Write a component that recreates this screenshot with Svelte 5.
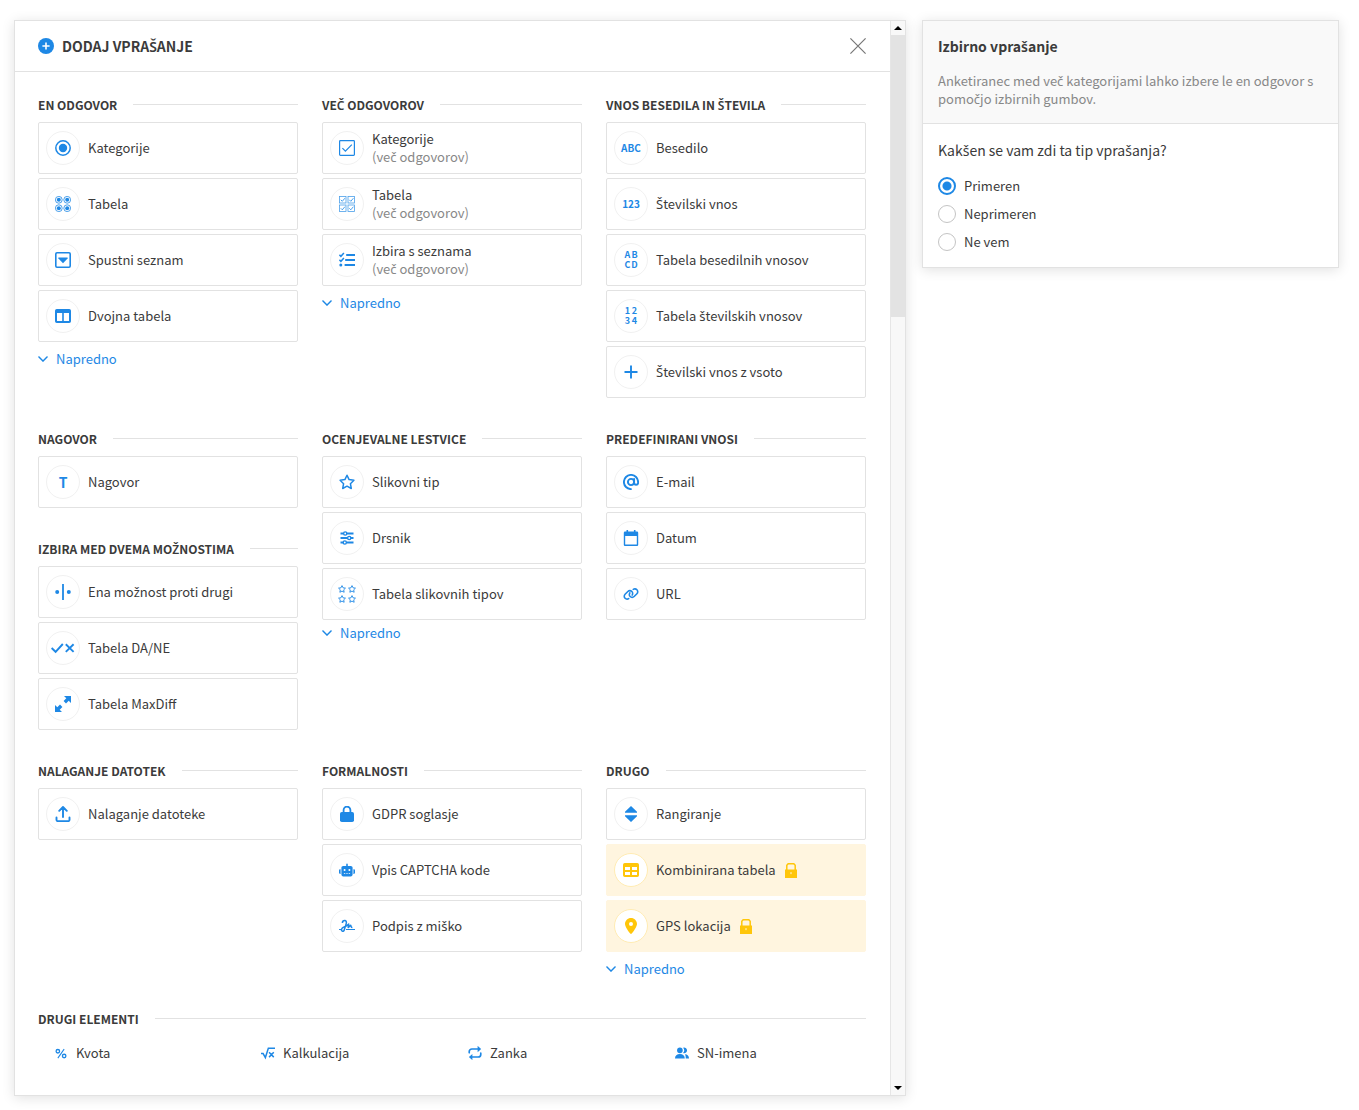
<script>
  const star = 'M8 1.2l2.1 4.4 4.8.7-3.5 3.4.9 4.8L8 12.2l-4.3 2.3.9-4.8L1.1 6.3l4.8-.7z';

  const icons = {
    add: { box: '0 0 16 16', body: '<circle cx="8" cy="8" r="8"/><path d="M8 4.4v7.2M4.4 8h7.2" stroke="#fff" stroke-width="1.6"/>' },
    close: { box: '0 0 16 16', body: '<path d="M.4.4l15.2 15.2M15.6.4L.4 15.6" fill="none" stroke="currentColor" stroke-width="1.2"/>' },
    chevron: { box: '0 0 10 6', body: '<path d="M.5.6L5 5.1 9.5.6" fill="none" stroke="currentColor" stroke-width="1.4"/>' },
    radio: { box: '0 0 16 16', body: '<circle cx="8" cy="8" r="7.2" fill="none" stroke="currentColor" stroke-width="1.5"/><circle cx="8" cy="8" r="4.2"/>' },
    radios: {
      box: '0 0 16 16',
      body: [[3.8, 3.8], [12.2, 3.8], [3.8, 12.2], [12.2, 12.2]]
        .map(([x, y]) => `<circle cx="${x}" cy="${y}" r="3.4" fill="none" stroke="currentColor" stroke-width=".8"/><circle cx="${x}" cy="${y}" r="2"/>`)
        .join('')
    },
    dropdown: { box: '0 0 16 16', body: '<rect x=".8" y=".8" width="14.4" height="14.4" rx="1.2" fill="none" stroke="currentColor" stroke-width="1.6"/><path d="M3.4 5.6h9.2v.8L8 11.2 3.4 6.4z"/>' },
    columns: { box: '0 0 16 16', body: '<path fill-rule="evenodd" d="M1.8 1h12.4A1.8 1.8 0 0 1 16 2.800v10.400a1.800 1.800 0 0 1-1.800 1.800H1.800A1.800 1.800 0 0 1 0 13.200V2.800A1.800 1.800 0 0 1 1.800 1zM2 5v8h5.200V5zM8.800 5v8H14V5z"/>' },
    check: { box: '0 0 16 16', body: '<rect x=".6" y=".6" width="14.800" height="14.800" rx=".8" fill="none" stroke="currentColor" stroke-width="1.200"/><path d="M3.400 8.200l3 3 6.400-6.600" fill="none" stroke="currentColor" stroke-width="1.200"/>' },
    checks: {
      box: '0 0 16 16',
      body: [[0, 0], [8.5, 0], [0, 8.5], [8.5, 8.5]]
        .map(([x, y]) => `<g transform="translate(${x} ${y})" fill="none" stroke="currentColor"><rect x=".5" y=".5" width="6.500" height="6.500" stroke-width=".8" opacity=".8"/><path d="M1.800 3.800l1.500 1.500 2.600-3.100" stroke-width=".8"/></g>`)
        .join('')
    },
    list: { box: '0 0 16 16', body: '<path d="M7.200 3h8.800M6.200 8H16M5.600 13H16" stroke="currentColor" stroke-width="1.900"/><path d="M.4 2.800l1.500 1.500L4.900 1M.4 7.800l1.500 1.500L4.900 6" fill="none" stroke="currentColor" stroke-width="1.500"/><circle cx="1.800" cy="13" r="1.500"/>' },
    plus: { box: '0 0 16 16', body: '<path d="M8 1.500v13M1.500 8h13" stroke="currentColor" stroke-width="1.900"/>' },
    star: { box: '0 0 16 16', body: `<path d="${star}" fill="none" stroke="currentColor" stroke-width="1.500" stroke-linejoin="round"/>` },
    stars: {
      box: '0 0 18 18',
      body: [[0, 0], [10, 0], [0, 10], [10, 10]]
        .map(([x, y]) => `<path transform="translate(${x} ${y}) scale(.5)" d="${star}" fill="none" stroke="currentColor" stroke-width="1.800"/>`)
        .join('')
    },
    sliders: { box: '0 0 16 16', body: '<path d="M1.500 3.500h3M8 3.500h6.500M1.500 8h7M12 8h2.500M1.500 12.500h2.500M7.500 12.500h7" stroke="currentColor" stroke-width="1.900"/><g fill="none" stroke="currentColor" stroke-width="1.400"><circle cx="6.200" cy="3.500" r="1.600"/><circle cx="10.200" cy="8" r="1.600"/><circle cx="5.800" cy="12.500" r="1.600"/></g>' },
    at: { box: '0 0 16 16', body: '<g fill="none" stroke="currentColor" stroke-width="1.900" stroke-linecap="round"><circle cx="8" cy="8" r="3.100"/><path d="M11.100 5v3.700a2 2 0 0 0 4 0V8A7.100 7.100 0 1 0 8 15.100"/></g>' },
    calendar: { box: '0 0 16 16', body: '<path fill-rule="evenodd" d="M3.500 0h1.600v1.500h5.800V0h1.600v1.500H14a1.200 1.200 0 0 1 1.200 1.200v12A1.200 1.200 0 0 1 14 16H2a1.200 1.200 0 0 1-1.200-1.300v-12A1.200 1.200 0 0 1 2 1.500h1.500zM2.200 6v8.600h11.600V6z"/>' },
    link: { box: '0 0 640 512', body: '<path d="M579.8 267.7c56.5-56.5 56.5-148 0-204.5c-50-50-128.8-56.5-186.3-15.4l-1.6 1.1c-14.4 10.3-17.7 30.3-7.4 44.6s30.3 17.7 44.6 7.4l1.6-1.1c32.1-22.9 76-19.3 103.8 8.6c31.5 31.5 31.5 82.5 0 114L422.3 334.8c-31.5 31.5-82.5 31.5-114 0c-27.9-27.9-31.5-71.8-8.6-103.8l1.1-1.6c10.3-14.4 6.9-34.4-7.4-44.6s-34.4-6.9-44.6 7.4l-1.1 1.6C206.5 251.2 213 330 263 380c56.5 56.5 148 56.5 204.5 0L579.8 267.7zM60.2 244.3c-56.5 56.5-56.5 148 0 204.5c50 50 128.8 56.5 186.3 15.4l1.6-1.1c14.4-10.3 17.7-30.3 7.4-44.6s-30.3-17.7-44.6-7.4l-1.6 1.1c-32.1 22.9-76 19.3-103.8-8.6C74 372 74 321 105.5 289.5L217.7 177.2c31.5-31.5 82.5-31.5 114 0c27.9 27.9 31.5 71.8 8.6 103.9l-1.1 1.6c-10.3 14.4-6.9 34.4 7.4 44.6s34.4 6.9 44.6-7.4l1.1-1.6C433.5 260.8 427 182 377 132c-56.5-56.5-148-56.5-204.5 0L60.2 244.3z"/>' },
    versus: { box: '0 0 16 16', body: '<path d="M7.100 0h1.800v16H7.100z"/><circle cx="2.200" cy="8" r="2"/><circle cx="13.800" cy="8" r="2"/>' },
    yesno: { box: '0 0 24 16', body: '<path d="M.6 8l4 3.800L11.800 4M14.800 4.300l7.800 7.600M22.600 4.300l-7.800 7.600" fill="none" stroke="currentColor" stroke-width="1.900"/>' },
    expand: { box: '0 0 16 16', body: '<path d="M9 0h7v7l-2.300-2.300L11 7.400 8.600 5l2.700-2.700zM7 16H0V9l2.300 2.300L5 8.600 7.400 11l-2.700 2.700z"/>' },
    upload: { box: '0 0 16 16', body: '<g fill="none" stroke="currentColor" stroke-width="1.900" stroke-linecap="round" stroke-linejoin="round"><path d="M8 11V1M4.200 4.800L8 1l3.800 3.800"/><path d="M1.500 11.500V14a1.200 1.200 0 0 0 1.200 1.100h10.600a1.200 1.200 0 0 0 1.200-1.100v-2.500"/></g>' },
    lock: { box: '0 0 16 16', body: '<rect x="1" y="6" width="14" height="10" rx="1.800"/><path d="M4.600 7V4a3.400 3.400 0 0 1 6.800 0v3" fill="none" stroke="currentColor" stroke-width="1.800"/>' },
    robot: { box: '0 -64 640 640', body: '<path d="M320 0c17.7 0 32 14.3 32 32V96H472c39.8 0 72 32.2 72 72V440c0 39.8-32.2 72-72 72H168c-39.8 0-72-32.2-72-72V168c0-39.8 32.2-72 72-72H288V32c0-17.7 14.3-32 32-32zM208 384c-8.8 0-16 7.2-16 16s7.2 16 16 16h32c8.8 0 16-7.2 16-16s-7.2-16-16-16H208zm96 0c-8.8 0-16 7.2-16 16s7.2 16 16 16h32c8.8 0 16-7.2 16-16s-7.2-16-16-16H304zm96 0c-8.8 0-16 7.2-16 16s7.2 16 16 16h32c8.8 0 16-7.2 16-16s-7.2-16-16-16H400zM264 256a40 40 0 1 0 -80 0 40 40 0 1 0 80 0zm152 40a40 40 0 1 0 0-80 40 40 0 1 0 0 80zM48 224H64V416H48c-26.5 0-48-21.5-48-48V272c0-26.5 21.5-48 48-48zm544 0c26.5 0 48 21.5 48 48v96c0 26.5-21.5 48-48 48H576V224h16z"/>' },
    sign: { box: '0 0 16 16', body: '<g fill="none" stroke="currentColor" stroke-width="1.500" stroke-linejoin="round"><path d="M3.400 5c0-1.700 1-2.400 2.300-2.400 1.600 0 2 1.300 1.500 3L5.400 11.500c-.4 1.500-1.200 2-2.200 1.600-1.500-.7-.6-3 1.300-3.800L7.600 7.900l2.100-1.900-.5 3.600 2.400-2.400c.6 1.100.4 2.400 1.800 2.400"/><path d="M0 11.500h2.500M7 11.500h9" stroke-width="1.200"/></g>' },
    rank: { box: '0 0 16 16', body: '<path d="M8 0l6 5.700v1H2v-1zM8 16l6-5.700v-1H2v1z"/>' },
    table: { box: '0 0 16 16', body: '<path fill-rule="evenodd" d="M1.800 1h12.400A1.800 1.800 0 0 1 16 2.800v10.400a1.800 1.800 0 0 1-1.800 1.800H1.800A1.800 1.800 0 0 1 0 13.200V2.800A1.800 1.800 0 0 1 1.800 1zM2 5v3h5V5zM9 5v3h5V5zM2 10v3h5v-3zM9 10v3h5v-3z"/>' },
    pin: { box: '0 0 384 512', body: '<path d="M215.7 499.2C267 435 384 279.4 384 192C384 86 298 0 192 0S0 86 0 192c0 87.4 117 243 168.3 307.200c12.3 15.3 35.1 15.3 47.4 0zM192 128a64 64 0 1 1 0 128 64 64 0 1 1 0-128z"/>' },
    padlock: { box: '0 0 14 15', body: '<path d="M2.800 7V2.200L4.200.7h5.600l1.400 1.500V7" fill="none" stroke="currentColor" stroke-width="1.500"/><path fill-rule="evenodd" d="M1 6.500h12V15H1zM6 9.500l1 2 1-2z"/>' },
    percent: { box: '0 0 16 16', body: '<g fill="none" stroke="currentColor" stroke-width="1.500"><circle cx="4.400" cy="6" r="2"/><circle cx="11.600" cy="11.400" r="2"/><path d="M11.600 3.600L4.400 13.800" stroke-width="1.200"/></g>' },
    root: { box: '0 0 16 16', body: '<path d="M0 8.600h2.400l2.600 4.600L8.400 2.600H16M9.200 7.200l5.400 5.500M14.600 7.200l-5.400 5.500" fill="none" stroke="currentColor" stroke-width="1.700"/>' },
    repeat: { box: '0 0 16 16', body: '<path d="M1.400 7.800V6.400a3 3 0 0 1 3-3H12M14.600 8.200v1.400a3 3 0 0 1-3 3H4" fill="none" stroke="currentColor" stroke-width="1.900" stroke-linecap="round"/><path d="M11-.2l4 3.600L11 7zM5 9l-4 3.600 4 3.600z"/>' },
    users: { box: '0 0 16 16', body: '<circle cx="5.600" cy="5" r="3.200"/><path d="M0 14.400c0-3.400 2.200-5.200 5.600-5.200s5.600 1.800 5.600 5.200zM9.200 7.900a3.200 3.200 0 1 0 0-5.800 4.200 4.200 0 0 1 0 5.800zM12.300 14.400H16c0-3.300-1.700-5-4.700-5.100.8 1 1 2.900 1 5.100z"/>' }
  };

  const many = '(več odgovorov)';

  const rows = [
    [
      [{ title: 'EN ODGOVOR', more: true, items: [
        { icon: 'radio', label: 'Kategorije' },
        { icon: 'radios', label: 'Tabela' },
        { icon: 'dropdown', label: 'Spustni seznam' },
        { icon: 'columns', label: 'Dvojna tabela' }
      ] }],
      [{ title: 'VEČ ODGOVOROV', more: true, items: [
        { icon: 'check', label: 'Kategorije', note: many },
        { icon: 'checks', label: 'Tabela', note: many },
        { icon: 'list', label: 'Izbira s seznama', note: many }
      ] }],
      [{ title: 'VNOS BESEDILA IN ŠTEVILA', items: [
        { text: ['ABC'], label: 'Besedilo' },
        { text: ['123'], label: 'Številski vnos' },
        { text: ['A', 'B', 'C', 'D'], label: 'Tabela besedilnih vnosov' },
        { text: ['1', '2', '3', '4'], label: 'Tabela številskih vnosov' },
        { icon: 'plus', label: 'Številski vnos z vsoto' }
      ] }]
    ],
    [
      [
        { title: 'NAGOVOR', items: [{ text: ['T'], big: true, label: 'Nagovor' }] },
        { title: 'IZBIRA MED DVEMA MOŽNOSTIMA', items: [
          { icon: 'versus', label: 'Ena možnost proti drugi' },
          { icon: 'yesno', wide: true, label: 'Tabela DA/NE' },
          { icon: 'expand', label: 'Tabela MaxDiff' }
        ] }
      ],
      [{ title: 'OCENJEVALNE LESTVICE', more: true, tight: true, items: [
        { icon: 'star', label: 'Slikovni tip' },
        { icon: 'sliders', label: 'Drsnik' },
        { icon: 'stars', wide: true, label: 'Tabela slikovnih tipov' }
      ] }],
      [{ title: 'PREDEFINIRANI VNOSI', items: [
        { icon: 'at', label: 'E-mail' },
        { icon: 'calendar', label: 'Datum' },
        { icon: 'link', label: 'URL' }
      ] }]
    ],
    [
      [{ title: 'NALAGANJE DATOTEK', items: [{ icon: 'upload', label: 'Nalaganje datoteke' }] }],
      [{ title: 'FORMALNOSTI', items: [
        { icon: 'lock', label: 'GDPR soglasje' },
        { icon: 'robot', label: 'Vpis CAPTCHA kode' },
        { icon: 'sign', label: 'Podpis z miško' }
      ] }],
      [{ title: 'DRUGO', more: true, items: [
        { icon: 'rank', label: 'Rangiranje' },
        { icon: 'table', label: 'Kombinirana tabela', locked: true },
        { icon: 'pin', label: 'GPS lokacija', locked: true }
      ] }]
    ]
  ];

  const extras = [
    { icon: 'percent', label: 'Kvota' },
    { icon: 'root', label: 'Kalkulacija' },
    { icon: 'repeat', label: 'Zanka' },
    { icon: 'users', label: 'SN-imena' }
  ];

  const answers = ['Primeren', 'Neprimeren', 'Ne vem'];
  let answer = $state('Primeren');
</script>

{#snippet icon(name, cls = '')}
  <svg class="icon {cls}" viewBox={icons[name].box} fill="currentColor" aria-hidden="true">{@html icons[name].body}</svg>
{/snippet}

<!-- The main typeface has no letters with a caron, so those come from the second one. -->
{#snippet words(text)}<span>{#each text.split(/([čšžČŠŽ])/) as part, i}{#if i % 2}<span class="caron">{part}</span>{:else}{part}{/if}{/each}</span>{/snippet}

<div class="page">
  <main class="panel picker">
    <div class="content">
      <header>
        {@render icon('add')}
        <h1>{@render words('DODAJ VPRAŠANJE')}</h1>
        <button class="close" aria-label="Zapri">{@render icon('close')}</button>
      </header>

      <div class="body">
        {#each rows as columns}
          <div class="row">
            {#each columns as sections}
              <div class="column">
                {#each sections as section}
                  <section>
                    <h2>{@render words(section.title)}</h2>
                    <div class="cards">
                      {#each section.items as item}
                        <button class="card" class:locked={item.locked}>
                          <span class="badge">
                            {#if item.icon}
                              {@render icon(item.icon, item.wide ? 'wide' : '')}
                            {:else}
                              <span class="letters" class:quad={item.text.length === 4} class:big={item.big}>
                                {#each item.text as part}<span>{part}</span>{/each}
                              </span>
                            {/if}
                          </span>
                          <span class="label">
                            {@render words(item.label)}
                            {#if item.note}<span class="note">{@render words(item.note)}</span>{/if}
                          </span>
                          {#if item.locked}{@render icon('padlock', 'padlock')}{/if}
                        </button>
                      {/each}
                    </div>
                    {#if section.more}
                      <button class="more" class:tight={section.tight}>{@render icon('chevron', 'chevron')}Napredno</button>
                    {/if}
                  </section>
                {/each}
              </div>
            {/each}
          </div>
        {/each}

        <section>
          <h2>DRUGI ELEMENTI</h2>
          <div class="extras">
            {#each extras as extra}
              <button class="extra">{@render icon(extra.icon, 'small')}{extra.label}</button>
            {/each}
          </div>
        </section>
      </div>
    </div>

    <div class="scrollbar" aria-hidden="true">
      <span class="arrow up"></span>
      <span class="track"><span class="thumb"></span></span>
      <span class="arrow down"></span>
    </div>
  </main>

  <aside class="panel info">
    <div class="intro">
      <h3>{@render words('Izbirno vprašanje')}</h3>
      <p>{@render words('Anketiranec med več kategorijami lahko izbere le en odgovor s pomočjo izbirnih gumbov.')}</p>
    </div>
    <fieldset>
      <legend>{@render words('Kakšen se vam zdi ta tip vprašanja?')}</legend>
      {#each answers as option}
        <label><input type="radio" name="answer" value={option} bind:group={answer} />{option}</label>
      {/each}
    </fieldset>
  </aside>
</div>

<style>
  :global(body) {
    margin: 0;
    background: #fff;
  }
  .page {
    box-sizing: border-box;
    min-height: 100vh;
    padding: 20px 20px 14px 14px;
    display: grid;
    grid-template-columns: minmax(0, 892fr) minmax(0, 417fr);
    gap: 16px;
    font: 13px/18px 'Noto Sans CJK JP', 'Noto Sans', sans-serif;
    color: #3b3b3b;
  }
  .caron {
    font-family: 'Noto Sans', 'Open Sans', sans-serif;
    line-height: 1;
  }
  button {
    margin: 0;
    padding: 0;
    border: 0;
    background: none;
    font: inherit;
    color: inherit;
    text-align: left;
    cursor: pointer;
  }
  h1, h2, h3, p {
    margin: 0;
  }
  h1, h3, legend {
    font-size: 14px;
    line-height: 20px;
  }
  h1, h2, h3 {
    font-weight: 600;
  }
  .panel {
    border: 1px solid #e2e2e2;
    background: #fff;
    box-shadow: 0 2px 12px rgba(0, 0, 0, 0.12);
  }
  .picker {
    display: flex;
  }
  .content {
    flex: 1;
    min-width: 0;
  }
  .icon {
    width: 16px;
    height: 16px;
    flex: none;
    display: block;
    color: #1e88e5;
  }
  .icon.wide {
    width: 24px;
    height: 18px;
  }
  .icon.small {
    width: 14px;
    height: 14px;
  }
  .icon.chevron {
    width: 10px;
    height: 6px;
  }
  header {
    height: 50px;
    padding: 0 24px 0 23px;
    display: flex;
    align-items: center;
    gap: 8px;
    border-bottom: 1px solid #e2e2e2;
  }
  .close {
    margin-left: auto;
  }
  .close .icon {
    color: #777;
  }
  .body {
    padding: 24px 24px 32px 23px;
    display: grid;
    gap: 32px;
  }
  .row {
    display: grid;
    grid-template-columns: repeat(3, minmax(0, 1fr));
    gap: 24px;
    align-items: start;
  }
  .column {
    display: grid;
    gap: 32px;
  }
  h2 {
    margin-bottom: 8px;
    display: flex;
    align-items: center;
    gap: 16px;
    font-size: 12px;
    line-height: 18px;
    white-space: nowrap;
  }
  h2::after {
    content: '';
    flex: 1;
    height: 1px;
    margin-bottom: 1px;
    background: #e2e2e2;
  }
  .cards {
    display: grid;
    gap: 4px;
  }
  .card {
    box-sizing: border-box;
    min-height: 52px;
    padding: 0 7px;
    display: flex;
    align-items: center;
    gap: 8px;
    border: 1px solid #e2e2e2;
    border-radius: 2px;
  }
  .badge {
    box-sizing: border-box;
    width: 34px;
    height: 34px;
    flex: none;
    display: flex;
    align-items: center;
    justify-content: center;
    border: 1px solid #f1f1f1;
    border-radius: 50%;
    background: #fff;
  }
  .letters {
    font-size: 10px;
    line-height: 10px;
    font-weight: 700;
    color: #1e88e5;
  }
  .letters.quad {
    display: grid;
    grid-template-columns: 7px 7px;
    font-size: 9px;
    text-align: center;
  }
  .letters.big {
    font-size: 14px;
  }
  .note {
    display: block;
    color: #888;
  }
  .locked {
    border-color: #fff5df;
    background: #fff5df;
  }
  .locked .badge {
    border-color: #ffecb3;
  }
  .locked .icon {
    color: #ffc60a;
  }
  .icon.padlock {
    width: 14px;
    height: 15px;
  }
  .more {
    margin-top: 8px;
    display: flex;
    align-items: center;
    gap: 8px;
    color: #1e88e5;
  }
  .more.tight {
    margin-top: 4px;
  }
  .extras {
    margin-top: 16px;
    display: grid;
    grid-template-columns: repeat(4, minmax(0, 1fr));
  }
  .extra {
    padding-left: 16px;
    display: flex;
    align-items: center;
    gap: 8px;
  }
  .scrollbar {
    width: 15px;
    flex: none;
    box-sizing: border-box;
    display: flex;
    flex-direction: column;
    border-left: 1px solid #e6e6e6;
    background: #f8f8f8;
  }
  .arrow {
    height: 14px;
    display: flex;
    align-items: center;
    justify-content: center;
  }
  .arrow::after {
    content: '';
    border: 4px solid transparent;
  }
  .up::after {
    border-top: 0;
    border-bottom-color: #000;
  }
  .down::after {
    border-bottom: 0;
    border-top-color: #000;
  }
  .track {
    flex: 1;
  }
  .thumb {
    display: block;
    height: 27%;
    background: #e3e3e3;
  }
  .info {
    align-self: start;
  }
  .intro {
    padding: 15px;
    border-bottom: 1px solid #e2e2e2;
    background: #f9f9f9;
  }
  .intro p {
    margin-top: 16px;
    color: #888;
  }
  fieldset {
    margin: 0;
    padding: 16px 15px;
    border: 0;
    display: grid;
    gap: 10px;
    min-width: 0;
  }
  legend {
    float: left;
    padding: 0;
    margin-bottom: 7px;
  }
  label {
    display: flex;
    align-items: center;
    gap: 8px;
  }
  input {
    appearance: none;
    box-sizing: border-box;
    width: 18px;
    height: 18px;
    margin: 0;
    border: 1px solid #c4c4c4;
    border-radius: 50%;
    background: #fff;
  }
  input:checked {
    border: 2px solid #1e88e5;
    background: radial-gradient(circle, #1e88e5 4px, #fff 5px);
  }
</style>
